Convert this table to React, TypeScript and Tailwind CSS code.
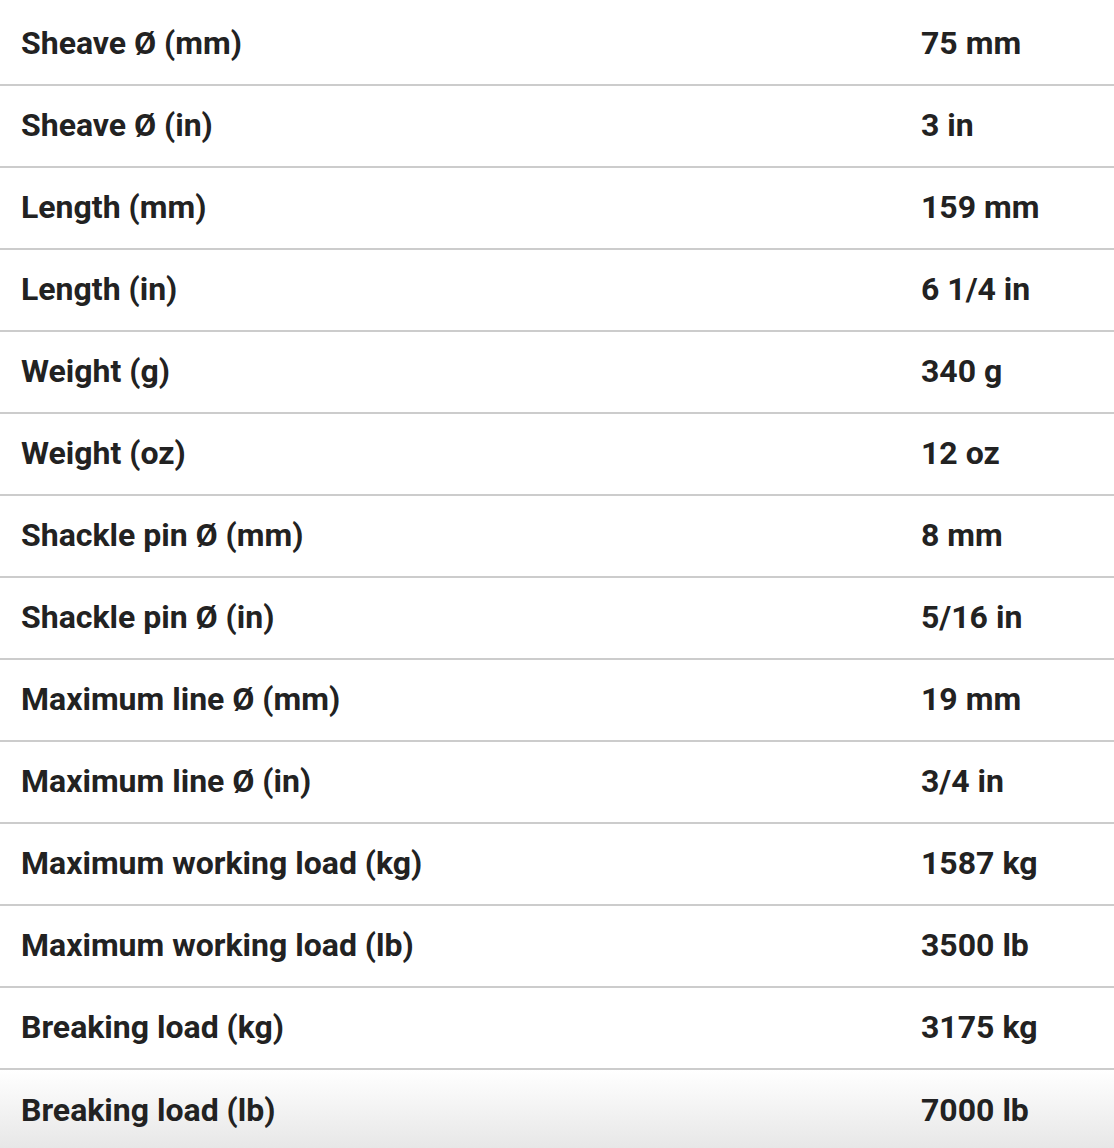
import React from 'react';

const specs = [
  ['Sheave Ø (mm)', '75 mm'],
  ['Sheave Ø (in)', '3 in'],
  ['Length (mm)', '159 mm'],
  ['Length (in)', '6 1/4 in'],
  ['Weight (g)', '340 g'],
  ['Weight (oz)', '12 oz'],
  ['Shackle pin Ø (mm)', '8 mm'],
  ['Shackle pin Ø (in)', '5/16 in'],
  ['Maximum line Ø (mm)', '19 mm'],
  ['Maximum line Ø (in)', '3/4 in'],
  ['Maximum working load (kg)', '1587 kg'],
  ['Maximum working load (lb)', '3500 lb'],
  ['Breaking load (kg)', '3175 kg'],
  ['Breaking load (lb)', '7000 lb'],
];

const App: React.FC = () => {
  return (
    <div
      className="w-[1114px] h-[1148px] overflow-hidden bg-white pt-[4px] text-[#222222]"
      style={{ fontFamily: 'Roboto, "Liberation Sans", sans-serif' }}
    >
      {specs.map(([label, value], i) => {
        const last = i === specs.length - 1;
        return (
          <div
            key={label}
            className={`flex items-center h-[82px] pb-[2px] text-[32px] font-bold ${
              last ? 'bg-gradient-to-b from-white to-[#e6e6e6]' : 'border-b-2 border-[#cccccc]'
            }`}
          >
            <div className="w-[921px] pl-[21px]">{label}</div>
            <div>{value}</div>
          </div>
        );
      })}
    </div>
  );
};

export default App;
